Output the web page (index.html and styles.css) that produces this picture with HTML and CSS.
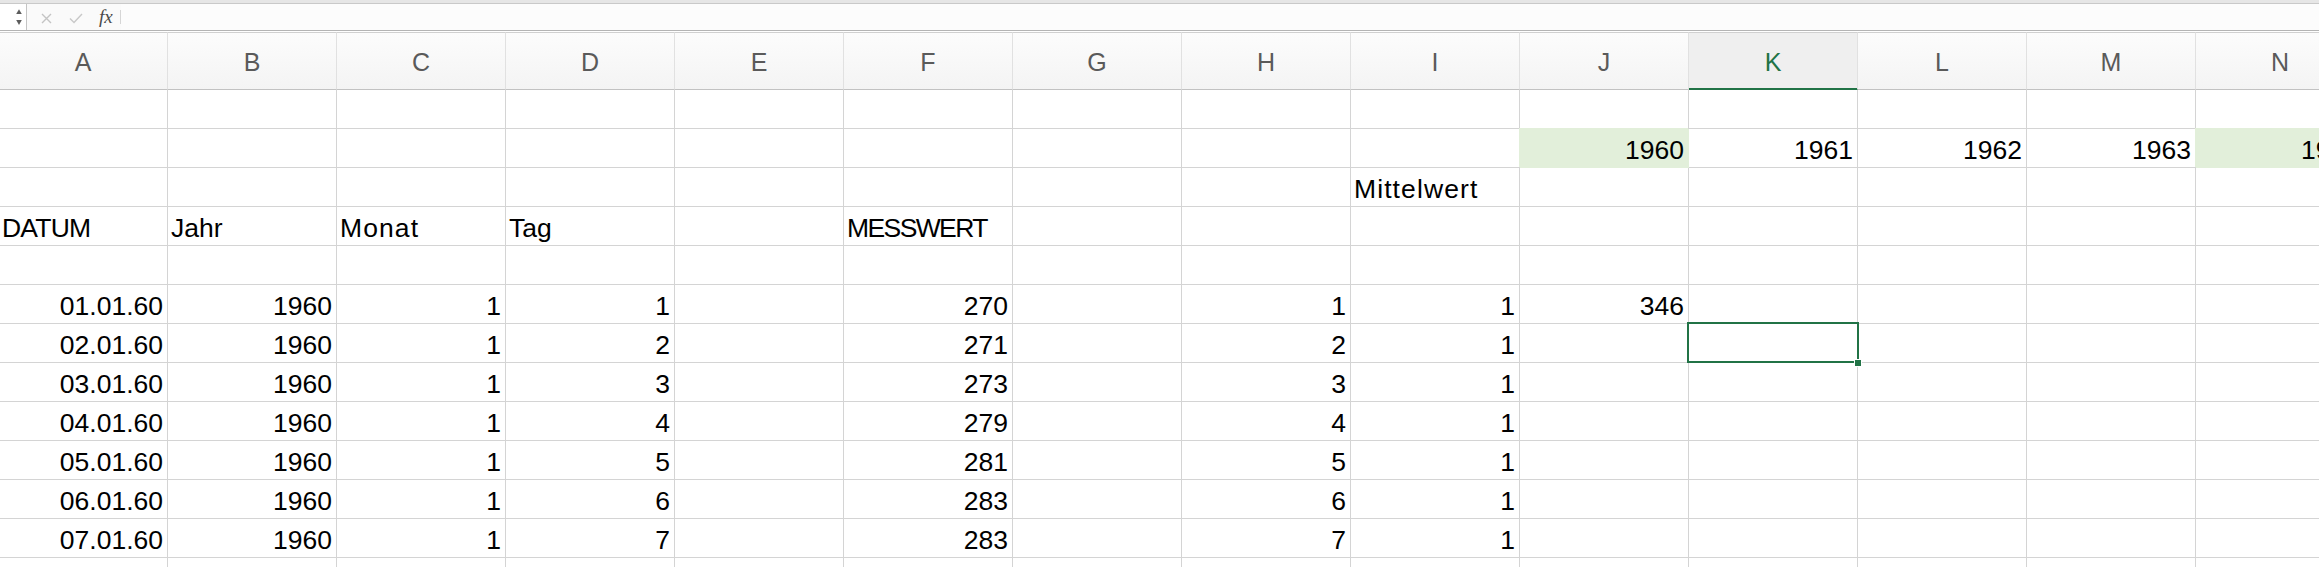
FILE: index.html
```html
<!DOCTYPE html>
<html lang="de">
<head>
<meta charset="utf-8">
<title>Tabelle</title>
<link rel="stylesheet" href="styles.css">
</head>
<body>
<div class="topstrip"></div>
<div class="fbar">
  <div class="namebox">
    <svg class="stepper" width="6" height="18" viewBox="0 0 6 18"><polygon points="0.2,5 3,0.2 5.8,5" fill="#5c5c5c"/><polygon points="0.2,11 5.8,11 3,16" fill="#5c5c5c"/></svg>
  </div>
  <div class="fbtools">
    <svg class="ico-x" width="11" height="11" viewBox="0 0 11 11"><path d="M1 1 L10 10 M10 1 L1 10" stroke="#c4c4c4" stroke-width="1.4" fill="none"/></svg>
    <svg class="ico-ok" width="14" height="11" viewBox="0 0 14 11"><path d="M1 5.5 L5 9.5 L13 1" stroke="#c8c8c8" stroke-width="1.4" fill="none"/></svg>
    <span class="fx">fx</span>
    <span class="fsep"></span>
  </div>
  <div class="finput"></div>
</div>
<div class="sheet">
  <div class="hd">A</div><div class="hd">B</div><div class="hd">C</div><div class="hd">D</div><div class="hd">E</div><div class="hd">F</div><div class="hd">G</div><div class="hd">H</div><div class="hd">I</div><div class="hd">J</div><div class="hd hd-sel">K</div><div class="hd">L</div><div class="hd">M</div><div class="hd">N</div>

  <div class="c"></div><div class="c"></div><div class="c"></div><div class="c"></div><div class="c"></div><div class="c"></div><div class="c"></div><div class="c"></div><div class="c"></div><div class="c"></div><div class="c"></div><div class="c"></div><div class="c"></div><div class="c"></div>

  <div class="c"></div><div class="c"></div><div class="c"></div><div class="c"></div><div class="c"></div><div class="c"></div><div class="c"></div><div class="c"></div><div class="c"></div><div class="c r fill">1960</div><div class="c r">1961</div><div class="c r">1962</div><div class="c r">1963</div><div class="c r fill">1964</div>

  <div class="c"></div><div class="c"></div><div class="c"></div><div class="c"></div><div class="c"></div><div class="c"></div><div class="c"></div><div class="c"></div><div class="c wide">Mittelwert</div><div class="c"></div><div class="c"></div><div class="c"></div><div class="c"></div><div class="c"></div>

  <div class="c caps">DATUM</div><div class="c">Jahr</div><div class="c wide">Monat</div><div class="c">Tag</div><div class="c"></div><div class="c caps-tight">MESSWERT</div><div class="c"></div><div class="c"></div><div class="c"></div><div class="c"></div><div class="c"></div><div class="c"></div><div class="c"></div><div class="c"></div>

  <div class="c"></div><div class="c"></div><div class="c"></div><div class="c"></div><div class="c"></div><div class="c"></div><div class="c"></div><div class="c"></div><div class="c"></div><div class="c"></div><div class="c"></div><div class="c"></div><div class="c"></div><div class="c"></div>

  <div class="c r">01.01.60</div><div class="c r">1960</div><div class="c r">1</div><div class="c r">1</div><div class="c"></div><div class="c r">270</div><div class="c"></div><div class="c r">1</div><div class="c r">1</div><div class="c r">346</div><div class="c"></div><div class="c"></div><div class="c"></div><div class="c"></div>

  <div class="c r">02.01.60</div><div class="c r">1960</div><div class="c r">1</div><div class="c r">2</div><div class="c"></div><div class="c r">271</div><div class="c"></div><div class="c r">2</div><div class="c r">1</div><div class="c"></div><div class="c active"><span class="selbox"><span class="handle"></span></span></div><div class="c"></div><div class="c"></div><div class="c"></div>

  <div class="c r">03.01.60</div><div class="c r">1960</div><div class="c r">1</div><div class="c r">3</div><div class="c"></div><div class="c r">273</div><div class="c"></div><div class="c r">3</div><div class="c r">1</div><div class="c"></div><div class="c"></div><div class="c"></div><div class="c"></div><div class="c"></div>

  <div class="c r">04.01.60</div><div class="c r">1960</div><div class="c r">1</div><div class="c r">4</div><div class="c"></div><div class="c r">279</div><div class="c"></div><div class="c r">4</div><div class="c r">1</div><div class="c"></div><div class="c"></div><div class="c"></div><div class="c"></div><div class="c"></div>

  <div class="c r">05.01.60</div><div class="c r">1960</div><div class="c r">1</div><div class="c r">5</div><div class="c"></div><div class="c r">281</div><div class="c"></div><div class="c r">5</div><div class="c r">1</div><div class="c"></div><div class="c"></div><div class="c"></div><div class="c"></div><div class="c"></div>

  <div class="c r">06.01.60</div><div class="c r">1960</div><div class="c r">1</div><div class="c r">6</div><div class="c"></div><div class="c r">283</div><div class="c"></div><div class="c r">6</div><div class="c r">1</div><div class="c"></div><div class="c"></div><div class="c"></div><div class="c"></div><div class="c"></div>

  <div class="c r">07.01.60</div><div class="c r">1960</div><div class="c r">1</div><div class="c r">7</div><div class="c"></div><div class="c r">283</div><div class="c"></div><div class="c r">7</div><div class="c r">1</div><div class="c"></div><div class="c"></div><div class="c"></div><div class="c"></div><div class="c"></div>

  <div class="c"></div><div class="c"></div><div class="c"></div><div class="c"></div><div class="c"></div><div class="c"></div><div class="c"></div><div class="c"></div><div class="c"></div><div class="c"></div><div class="c"></div><div class="c"></div><div class="c"></div><div class="c"></div>
</div>
</body>
</html>
```
FILE: styles.css
```css
html, body {
  margin: 0;
  padding: 0;
  background: #ffffff;
  overflow: hidden;
}
body {
  width: 2319px;
  height: 567px;
  font-family: "Liberation Sans", Arial, sans-serif;
}

.topstrip {
  height: 3px;
  background: #e6e6e6;
  border-bottom: 1px solid #c9c9c9;
}

.fbar {
  display: flex;
  height: 26px;
  background: #fafafa;
  border-bottom: 1px solid #b4b4b4;
}
.namebox {
  width: 27px;
  flex: none;
  background: #ffffff;
  border-right: 1px solid #c4c4c4;
  padding: 5px 0 0 16px;
  box-sizing: border-box;
}
.stepper { display: block; }

.fbtools {
  display: flex;
  align-items: center;
  padding-left: 14px;
  flex: none;
}
.ico-x { display: block; margin-top: 3px; }
.ico-ok { display: block; margin-left: 17px; margin-top: 2px; }
.fx {
  font-family: "Liberation Serif", "Times New Roman", serif;
  font-style: italic;
  font-size: 19px;
  color: #4a4a4a;
  margin-left: 16px;
  line-height: 1;
  margin-top: -2px;
}
.fsep {
  width: 1px;
  height: 14px;
  background: #d6d6d6;
  margin-left: 7px;
}
.finput {
  flex: 1;
  background: #fcfcfc;
}

.sheet {
  margin-top: 1px;
  margin-left: -1px;
  display: grid;
  grid-template-columns: repeat(14, 169px);
  grid-template-rows: 58px;
  grid-auto-rows: 39px;
  width: max-content;
}

.hd {
  box-sizing: border-box;
  border-top: 1px solid #d0d0d0;
  border-bottom: 1px solid #c2c2c2;
  border-right: 1px solid #e1e1e1;
  background: linear-gradient(#fcfcfc, #f4f4f4);
  color: #5a5a5a;
  font-size: 25px;
  line-height: 25px;
  display: flex;
  align-items: center;
  justify-content: center;
  padding-top: 3px;
}
.hd-sel {
  background: #efefef;
  color: #217346;
  border-bottom-color: #217346;
  box-shadow: inset 0 -1px 0 #217346;
}

.c {
  box-sizing: border-box;
  border-right: 1px solid #d4d4d4;
  border-bottom: 1px solid #d4d4d4;
  font-size: 26.5px;
  line-height: 26.5px;
  color: #000000;
  display: flex;
  align-items: flex-end;
  padding: 0 4px 4px 3px;
  white-space: nowrap;
}
.r { justify-content: flex-end; }
.caps { letter-spacing: -0.8px; }
.caps-tight { letter-spacing: -1.6px; }
.wide { letter-spacing: 1.1px; }

.fill {
  background: #e2efda;
  border-color: #e2efda;
  box-shadow: -1px -1px 0 #e2efda;
}

.active { position: relative; }
.selbox {
  position: absolute;
  left: -2px;
  top: -2px;
  width: 172px;
  height: 41px;
  box-sizing: border-box;
  border: 2px solid #217346;
}
.handle {
  position: absolute;
  right: -5px;
  bottom: -6px;
  width: 6px;
  height: 6px;
  background: #217346;
  border: 1px solid #ffffff;
}
```
